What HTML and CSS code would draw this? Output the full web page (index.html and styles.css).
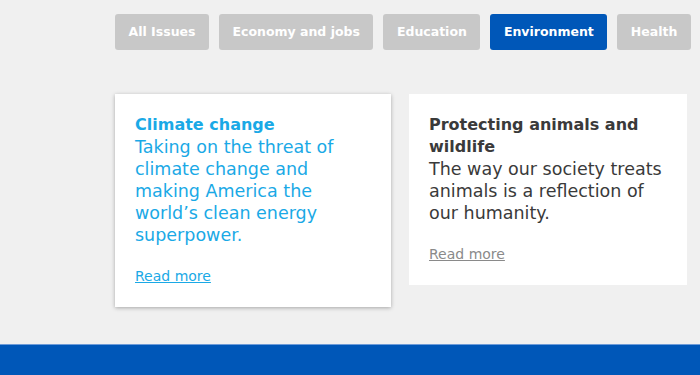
FILE: index.html
```html
<!DOCTYPE html>
<html>
<head>
    <meta charset="utf-8" />
    <title>Issues</title>
    <link rel="stylesheet" href="styles.css">
</head>
<body>
    <div class="page">
        <ul class="issue-tabs">
            <li class="tab">All Issues</li>
            <li class="tab">Economy and jobs</li>
            <li class="tab">Education</li>
            <li class="tab" id="tab-selected">Environment</li>
            <li class="tab">Health</li>
        </ul>
        <div class="issue-list">
            <div class="issue-card card-hover">
                <h3>Climate change</h3>
                <p>Taking on the threat of climate change and making America the world’s clean energy superpower.</p>
                <a href="#">Read more</a>
            </div>
            <div class="issue-card">
                <h3>Protecting animals and wildlife</h3>
                <p>The way our society treats animals is a reflection of our humanity.</p>
                <a href="#">Read more</a>
            </div>
        </div>
    </div>
    <footer class="site-footer"></footer>
</body>
</html>
```
FILE: styles.css
```css
body {
    background-color: #f0f0f0;
    font-family: "DejaVu Sans", "Liberation Sans", sans-serif;
    margin: 0px;
}

.page {
    padding: 14px 0 0 115px;
    height: 344px;
    box-sizing: border-box;
}

.issue-tabs {
    list-style-type: none;
    margin: 0;
    padding: 0;
    display: flex;
    gap: 10px;
}

.issue-tabs .tab {
    background-color: #c8c8c8;
    color: #fff;
    font-weight: 700;
    font-size: 12.5px;
    height: 36px;
    line-height: 36px;
    padding: 0 13.5px;
    border-radius: 3px;
    white-space: nowrap;
}

#tab-selected {
    background-color: #0057b8;
}

.issue-list {
    display: flex;
    align-items: flex-start;
    gap: 18px;
    margin-top: 44px;
}

.issue-card {
    background-color: #fff;
    width: 278px;
    box-sizing: border-box;
    padding: 20px 20px 21px 20px;
    color: #3a3a3a;
}

.issue-card.card-hover {
    width: 276px;
    color: #1aa9e6;
    box-shadow: 0 1px 4px rgba(0, 0, 0, 0.3);
}

.issue-card h3 {
    font-size: 16px;
    line-height: 22px;
    margin: 0;
}

.issue-card p {
    font-size: 17.5px;
    line-height: 22px;
    margin: 0 0 20px 0;
}

.issue-card a {
    font-size: 14px;
    line-height: 20px;
    color: #8a8a8a;
}

.issue-card.card-hover a {
    color: #1aa9e6;
}

.site-footer {
    background-color: #0057b8;
    border-top: 1px solid #6d9bd8;
    height: 31px;
}
```
